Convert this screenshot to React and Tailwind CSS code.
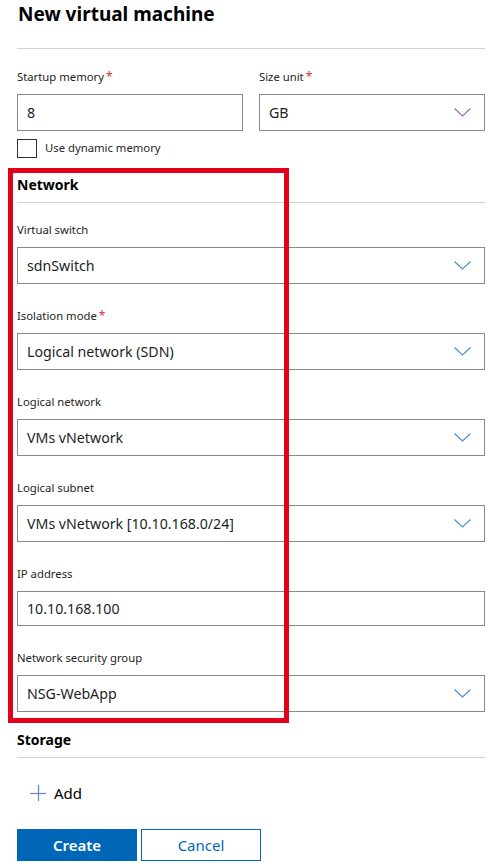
const fields = [
    { label: 'Virtual switch', value: 'sdnSwitch', select: true },
    { label: 'Isolation mode', value: 'Logical network (SDN)', select: true, required: true },
    { label: 'Logical network', value: 'VMs vNetwork', select: true },
    { label: 'Logical subnet', value: 'VMs vNetwork [10.10.168.0/24]', select: true },
    { label: 'IP address', value: '10.10.168.100', short: true },
    { label: 'Network security group', value: 'NSG-WebApp', select: true },
]

function Chevron({ color = '#4a90d9' }) {
    return (
        <svg width="17" height="9" viewBox="0 0 17 9" fill="none" className="flex-none">
            <path d="M0.5 0.5 L8.5 8 L16.5 0.5" stroke={color} strokeWidth="1.2" />
        </svg>
    )
}

function Label({ text, required }) {
    return (
        <div className="h-[20px] leading-[20px] text-[11.3px] text-[#252423]">
            {text}
            {required && <span className="ml-[2px] text-[12px] text-[#d13438]">*</span>}
        </div>
    )
}

function Field({ value, select, chevron, short }) {
    return (
        <div
            className={
                'flex items-center justify-between border border-[#8a8886] bg-white pl-[9px] pr-[13px] text-[14.2px] text-[#201f1e] ' +
                (short ? 'h-[35px]' : 'h-[37px]')
            }
        >
            <span>{value}</span>
            {select && <Chevron color={chevron} />}
        </div>
    )
}

function Section({ title }) {
    return (
        <div>
            <div className="h-[22px] leading-[22px] text-[14px] font-bold text-black">{title}</div>
            <div className="mt-[6px] h-px bg-[#d2d0ce]" />
        </div>
    )
}

export default function App() {
    return (
        <div
            className="relative w-[502px] bg-white px-[17px] pb-[6px]"
            style={{ fontFamily: '"Segoe UI", "Noto Sans", sans-serif' }}
        >
            <h1 className="h-[28px] pl-px leading-[28px] text-[19px] font-bold text-black">New virtual machine</h1>
            <div className="mt-[20px] h-px bg-[#d2d0ce]" />

            <div className="mt-[18px] flex gap-[16px]">
                <div className="flex-1">
                    <Label text="Startup memory" required />
                    <div className="mt-[7px]">
                        <Field value="8" />
                    </div>
                </div>
                <div className="flex-1">
                    <Label text="Size unit" required />
                    <div className="mt-[7px]">
                        <Field value="GB" select chevron="#9a6fb8" />
                    </div>
                </div>
            </div>

            <label className="mt-[8px] flex h-[19px] items-center gap-[8px] text-[11.3px] text-[#252423]">
                <span className="h-[19px] w-[20px] border border-[#323130] bg-white" />
                Use dynamic memory
            </label>

            <div className="mt-[16px]">
                <Section title="Network" />
            </div>

            <div className="mt-[17px] flex flex-col gap-[22px]">
                {fields.map((f) => (
                    <div key={f.label}>
                        <Label text={f.label} required={f.required} />
                        <div className="mt-[7px]">
                            <Field value={f.value} select={f.select} short={f.short} />
                        </div>
                    </div>
                ))}
            </div>

            <div className="mt-[17px]">
                <Section title="Storage" />
            </div>

            <button className="mt-[23px] ml-[13px] flex h-[24px] items-center gap-[8px] text-[15px] text-black">
                <svg width="16" height="16" viewBox="0 0 16 16" className="flex-none">
                    <path d="M0 8.5 H16" stroke="#7a7fc4" strokeWidth="1.2" />
                    <path d="M8.5 0 V16" stroke="#4a90d9" strokeWidth="1.2" />
                </svg>
                Add
            </button>

            <div className="mt-[24px] flex gap-[4px]">
                <button className="h-[32px] w-[120px] bg-[#0067b8] text-[15px] font-semibold text-white">Create</button>
                <button className="h-[32px] w-[120px] border border-[#0067b8] bg-white text-[15px] text-[#0067b8]">Cancel</button>
            </div>

            <div className="pointer-events-none absolute left-[8px] top-[168px] h-[555px] w-[281px] border-[5px] border-[#e3001b]" />
        </div>
    )
}
